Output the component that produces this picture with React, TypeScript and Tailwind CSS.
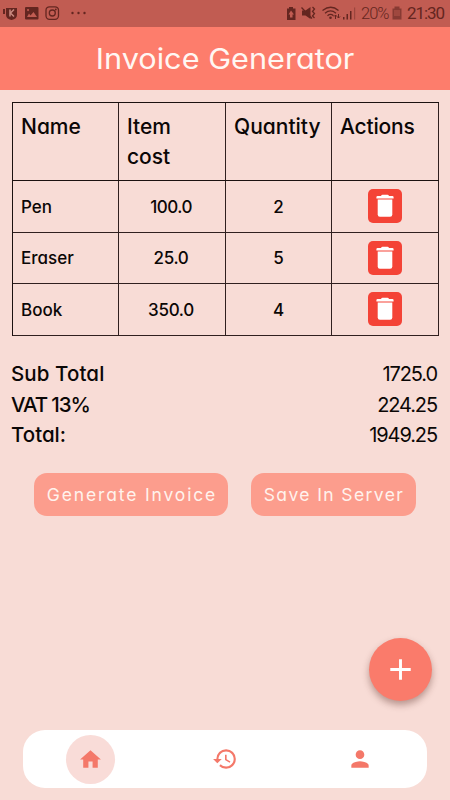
import type { ReactNode } from 'react';
import { MdAdd, MdHistory, MdHome, MdPerson } from 'react-icons/md';

const items = [
  { name: 'Pen', cost: '100.0', quantity: '2', height: 'h-[52px]', costTrack: 'tracking-[-0.5px]' },
  { name: 'Eraser', cost: '25.0', quantity: '5', height: 'h-[51px]', costTrack: 'tracking-[-0.3px]' },
  { name: 'Book', cost: '350.0', quantity: '4', height: 'h-[52px]', costTrack: 'tracking-[-0.3px]' },
];

const totals = [
  { label: 'Sub Total', value: '1725.0', track: 'tracking-[0.1px]' },
  { label: 'VAT 13%', value: '224.25', track: 'tracking-[-1.1px]' },
  { label: 'Total:', value: '1949.25', track: 'tracking-[0px]' },
];

function StatusBar() {
  return (
    <div className="flex h-[27px] shrink-0 items-center bg-[#c15c52] pl-[3px] pr-[6px] text-[#642620]">
      <svg width="90" height="27" viewBox="0 0 90 27" fill="currentColor">
        <path d="M0 9h2v5H0zM3 8h11v7q0 4-5.500 5Q3 19 3 15z" />
        <path d="M7 9.500v7M11 9.500L7.500 13L11 16.500" fill="none" stroke="#c98a80" strokeWidth="1.500" />
        <path fillRule="evenodd" d="M23 7h11.500q1 0 1 1v10.500q0 1-1 1H23q-1 0-1-1V8q0-1 1-1zM24 17h10l-3.500-5l-3 3.500l-1.500-2zM25 9a1 1 0 1 0 .1 0z" />
        <g fill="none" stroke="currentColor" strokeWidth="1.300">
          <rect x="43" y="6.800" width="12.500" height="12.500" rx="3.500" />
          <circle cx="49.300" cy="13" r="3" />
        </g>
        <circle cx="52.800" cy="9.500" r=".9" />
        <circle cx="69.500" cy="13" r="1.200" /><circle cx="75.500" cy="13" r="1.200" /><circle cx="81.500" cy="13" r="1.200" />
      </svg>
      <svg className="ml-auto" width="72" height="27" viewBox="286 0 72 27" fill="currentColor">
        <path fillRule="evenodd" d="M287 8.500h2V7h4v1.500h2.500V20H287zM291 10.500l-2.500 4h1.500v3h2.500v-3h1.500z" />
        <path d="M302 10.500h3.500l5-3.500v12l-5-3.500h-3.500z" />
        <path d="M301.500 7.500L312 18.500M312.500 7l2 2l-2 2.500l2 2l-2 2.500l2 2" fill="none" stroke="currentColor" strokeWidth="1.300" />
        <g fill="none" stroke="currentColor" strokeWidth="1.300">
          <path d="M322.500 10.500q8.500-6.500 16 0M325 13.200q5.500-4.500 11 0M327.500 15.700q3-2.500 6 0" />
          <path d="M335.500 19v-4m-1.500 1.500l1.500-1.500l1.500 1.500M338.500 14v4m-1.500-1.500l1.500 1.500l1.500-1.500" strokeWidth="1" />
        </g>
        <circle cx="330.500" cy="17.800" r="1.300" />
        <path d="M343 17h1.500v2.500H343zM346.500 14h1.500v5.500h-1.500zM350 11h1.500v8.500H350z" />
        <path d="M354 7.500h1.200v12H354z" opacity=".4" />
      </svg>
      <span className="ml-[3px] w-[27px] whitespace-nowrap font-[Roboto,sans-serif] text-[16.500px] font-light leading-[27px] tracking-[-1px]">20%</span>
      <svg className="ml-[4px] mr-px" width="10" height="27" viewBox="0 0 10 27">
        <path d="M.5 8.500h2V6.500h5v2h2v11H.5z" fill="#873a33" />
        <path d="M2 10h6v6H2z" fill="#9f483f" />
      </svg>
      <span className="ml-[4px] w-[37px] whitespace-nowrap font-[Roboto,sans-serif] text-[17px] leading-[27px] tracking-[-1.1px]">21:30</span>
    </div>
  );
}

function Cell({ children, className = '' }: { children: ReactNode; className?: string }) {
  return <div className={`border-r border-[#30201f] ${className}`}>{children}</div>;
}

const columns = 'grid grid-cols-[106px_107px_106px_107px]';

function DeleteButton() {
  return (
    <button aria-label="Delete" className="flex size-[34px] items-center justify-center rounded-[5px] bg-[#f44336]">
      <svg width="18" height="24" viewBox="0 0 18 24" fill="#fff">
        <path d="M.4 3.200Q.4 2 1.600 2H5Q5.500 .8 6.500 .8h5q1 0 1.500 1.200h3.400q1.200 0 1.200 1.200v1.200H.4z" />
        <path d="M1.700 5.500h14.600v15q0 2.200-2.200 2.200H3.900q-2.200 0-2.200-2.200z" />
      </svg>
    </button>
  );
}

export default function App() {
  return (
    <div className="flex h-[800px] w-[450px] flex-col overflow-hidden bg-[#f8dcd6] font-[Inter,sans-serif] text-[#0b0706] [font-feature-settings:'cv11']">
      <StatusBar />
      <header className="flex h-[63px] shrink-0 items-center justify-center bg-[#fd7d6c] text-[28px] text-[#fff7f3]">
        <h1 className="scale-x-[1.095]">Invoice Generator</h1>
      </header>

      <section className="ml-[12px] mt-[12px] w-[427px] border-l border-t border-[#1c1110]">
        <div className={`${columns} h-[78px] border-b border-[#1c1110] text-[21px] font-medium leading-[30px]`}>
          <Cell className="pl-2 pt-[9px]">Name</Cell>
          <Cell className="pl-2 pt-[9px]">Item<br />cost</Cell>
          <Cell className="pl-2 pt-[9px]">Quantity</Cell>
          <Cell className="pl-[8px] pt-[9px] tracking-[-0.2px]">Actions</Cell>
        </div>
        {items.map((item) => (
          <div key={item.name} className={`${columns} ${item.height} border-b border-[#30201f] text-[17px] font-medium`}>
            <Cell className="flex items-center pl-2 pt-[2px]">{item.name}</Cell>
            <Cell className={`flex items-center justify-center pr-[2px] pt-[2px] ${item.costTrack}`}>{item.cost}</Cell>
            <Cell className="flex items-center justify-center pt-[2px]">{item.quantity}</Cell>
            <Cell className="flex items-center justify-center pb-px pr-px"><DeleteButton /></Cell>
          </div>
        ))}
      </section>

      <section className="ml-[11px] mr-[12px] mt-[23px] text-[20.500px] leading-[30.500px]">
        {totals.map((row) => (
          <div key={row.label} className="flex justify-between">
            <span className={`font-medium ${row.track}`}>{row.label}</span>
            <span className="pr-px text-[20px] tracking-[-1.1px]">{row.value}</span>
          </div>
        ))}
      </section>

      <div className="ml-[34px] mt-[22.500px] flex gap-[23px] text-[17.500px] text-[#fff2ec]">
        <button className="h-[43px] w-[194px] whitespace-nowrap rounded-[13px] bg-[#fc9d8d] pl-[2px] pt-[2px] tracking-[1.850px]">Generate Invoice</button>
        <button className="h-[43px] w-[165px] whitespace-nowrap rounded-[13px] bg-[#fc9d8d] pl-px pt-[2px] tracking-[1.400px]">Save In Server</button>
      </div>

      <button aria-label="Add item" className="mb-[29px] ml-auto mr-[18px] mt-auto flex size-[63px] shrink-0 items-center justify-center rounded-full bg-[#fa7b6b] text-white shadow-[0_4px_7px_rgba(80,35,25,0.38)]">
        <MdAdd size={35} />
      </button>

      <nav className="mb-[12px] ml-[23px] flex h-[58px] w-[404px] shrink-0 items-center rounded-[22px] bg-white text-[#f47869]">
        <div className="flex flex-1 justify-center">
          <div className="flex size-[49px] items-center justify-center rounded-full bg-[#f9dcd8]"><MdHome size={25} /></div>
        </div>
        <div className="flex flex-1 justify-center"><MdHistory size={26} /></div>
        <div className="flex flex-1 justify-center"><MdPerson size={26} /></div>
      </nav>
    </div>
  );
}
